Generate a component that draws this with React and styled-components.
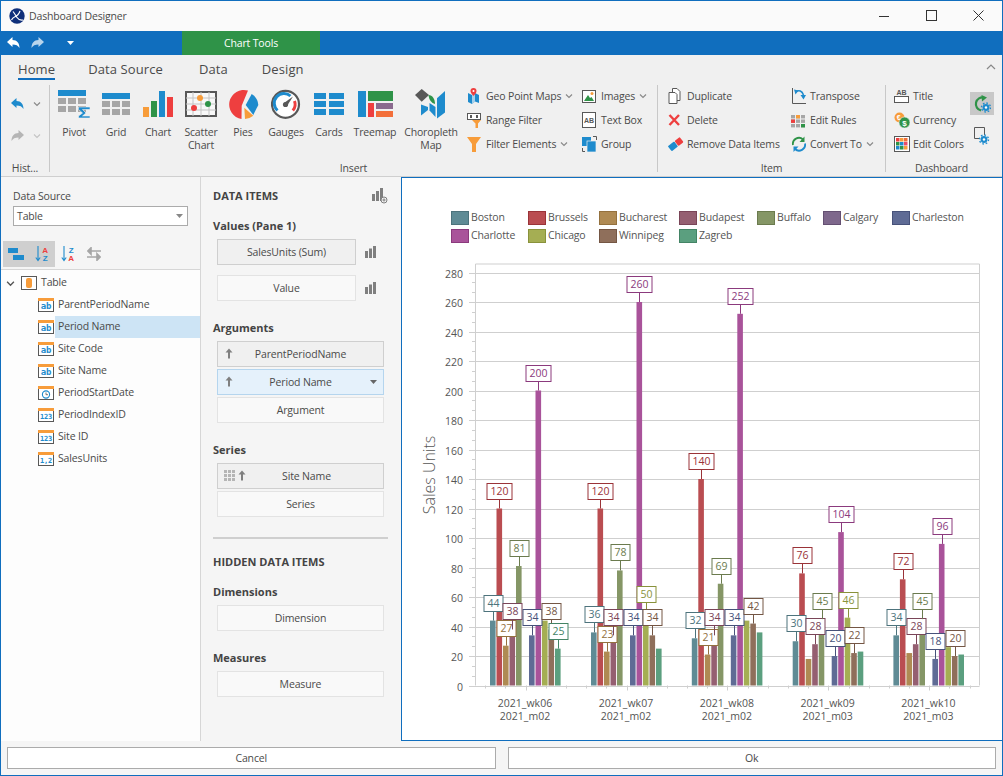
import React from 'react';
import styled, { createGlobalStyle } from 'styled-components';

const blue = '#106ebe';
const iconBlue = '#1e8bcd';
const orange = '#f79c3a';
const red = '#ee3f3f';
const green = '#2f9348';
const gray = '#a6a6a6';
const dark = '#585858';

const GlobalStyle = createGlobalStyle`
  html, body { margin: 0; padding: 0; background: #fff; }
  body {
    font-family: "Open Sans", "Noto Sans", sans-serif;
    font-size: 10.5px;
    letter-spacing: -0.15px;
    color: #4a4a4a;
  }
  svg { display: block; flex: none; }
`;

const Window = styled.div`
  box-sizing: border-box;
  width: 1003px;
  height: 776px;
  border: 1px solid ${blue};
  display: flex;
  flex-direction: column;
  overflow: hidden;
`;

const TitleBar = styled.div`
  height: 30px;
  flex: none;
  display: flex;
  align-items: center;
  padding-left: 8px;
  background: #fafafa;
  color: #4a4a4a;
`;
const TitleText = styled.span`
  margin-left: 4px;
  flex: 1;
`;
const WinButton = styled.div`
  width: 47px;
  height: 30px;
  display: flex;
  align-items: center;
  justify-content: center;
`;

const QatBar = styled.div`
  height: 24px;
  flex: none;
  display: flex;
  align-items: center;
  background: ${blue};
`;
const QatIcons = styled.div`
  width: 181px;
  display: flex;
  align-items: center;
  padding-left: 6px;
  box-sizing: border-box;
`;
const QatIcon = styled.span`
  margin-left: ${p => p.$ml || 0}px;
`;
const ContextTab = styled.div`
  width: 138px;
  height: 24px;
  box-sizing: border-box;
  background: ${green};
  color: #fff;
  display: flex;
  align-items: center;
  justify-content: center;
`;

const Ribbon = styled.div`
  height: 122px;
  flex: none;
  box-sizing: border-box;
  background: #f0f0f0;
  border-bottom: 1px solid #cfcfcf;
  position: relative;
`;
const Tabs = styled.div`
  height: 30px;
  display: flex;
  padding-left: 17px;
`;
const Tab = styled.div`
  height: 25px;
  margin-left: ${p => p.$ml || 0}px;
  box-sizing: border-box;
  padding-top: 5px;
  font-size: 13px;
  letter-spacing: 0.1px;
  color: #4a4a4a;
  border-bottom: 2px solid ${p => (p.$active ? blue : 'transparent')};
`;
const Collapse = styled.div`
  position: absolute;
  right: 6px;
  top: 9px;
`;
const Groups = styled.div`
  display: flex;
  height: 87px;
`;
const Group = styled.div`
  box-sizing: border-box;
  width: ${p => p.$w}px;
  height: 87px;
  border-right: ${p => (p.$last ? 'none' : '1px solid #c8c8c8')};
  display: flex;
  flex-direction: column;
`;
const GroupBody = styled.div`
  height: 73px;
  display: flex;
  padding-left: ${p => p.$pad || 0}px;
  box-sizing: border-box;
`;
const GroupLabel = styled.div`
  height: 14px;
  margin-bottom: -3px;
  margin-top: 3px;
  line-height: 14px;
  text-align: center;
`;
const HistoryRows = styled.div`
  padding-top: 3px;
  display: flex;
  flex-direction: column;
`;
const HistoryRow = styled.div`
  height: 32px;
  display: flex;
  align-items: center;
  gap: 9px;
  padding-left: 10px;
`;
const LargeButton = styled.div`
  width: ${p => p.$w}px;
  display: flex;
  flex-direction: column;
  align-items: center;
  padding-top: 3px;
`;
const LargeIcon = styled.div`
  height: 32px;
  display: flex;
  align-items: center;
  justify-content: center;
`;
const LargeLabel = styled.div`
  margin-top: 6px;
  line-height: 13px;
  text-align: center;
`;
const SmallColumn = styled.div`
  width: ${p => p.$w}px;
  margin-left: ${p => p.$ml || 0}px;
  display: flex;
  flex-direction: column;
  flex: none;
`;
const SmallItem = styled.div`
  height: 24px;
  margin-top: ${p => (p.$first ? '-1px' : 0)};
  display: flex;
  align-items: center;
  white-space: nowrap;
`;
const SmallIcon = styled.div`
  width: 19px;
  flex: none;
`;
const Caret = styled.span`
  margin-left: 4px;
  display: inline-flex;
`;
const SideButtons = styled.div`
  display: flex;
  flex-direction: column;
  align-items: center;
  width: 24px;
  gap: 9px;
  padding-top: 7px;
`;
const SideButton = styled.div`
  width: 24px;
  height: 23px;
  display: flex;
  align-items: center;
  justify-content: center;
  background: ${p => (p.$active ? '#c8c8c8' : 'transparent')};
`;

const Body = styled.div`
  flex: 1;
  display: flex;
  min-height: 0;
`;
const LeftPanel = styled.div`
  box-sizing: border-box;
  width: 200px;
  flex: none;
  border-right: 1px solid #d6d6d6;
  display: flex;
  flex-direction: column;
  background: #f5f5f5;
`;
const SourceBlock = styled.div`
  padding: 12px 12px 0 12px;
  height: 64px;
  box-sizing: border-box;
`;
const FieldLabel = styled.div`
  line-height: 14px;
  height: 17px;
`;
const Select = styled.div`
  box-sizing: border-box;
  height: 20px;
  width: 175px;
  border: 1px solid #ababab;
  background: #fff;
  display: flex;
  align-items: center;
  justify-content: space-between;
  padding: 0 4px 1px 3px;
`;
const SortBar = styled.div`
  height: 28px;
  padding-left: 2px;
  display: flex;
  border-bottom: 1px solid #d6d6d6;
`;
const SortButton = styled.div`
  width: 26px;
  height: 26px;
  display: flex;
  align-items: center;
  justify-content: center;
  background: ${p => (p.$active ? '#cfcfcf' : 'transparent')};
`;
const Tree = styled.div`
  flex: 1;
  padding-top: 2px;
  background: #fdfdfd;
`;
const TreeRow = styled.div`
  height: 22px;
  display: flex;
  align-items: center;
  padding-left: ${p => p.$indent}px;
`;
const TreeToggle = styled.span`
  margin-right: 6px;
`;
const TreeLabel = styled.div`
  flex: 1;
  align-self: stretch;
  display: flex;
  align-items: center;
  margin-left: 1px;
  padding: 0 0 2px 3px;
  background: ${p => (p.$selected ? '#cde4f5' : 'transparent')};
  color: #4a4a4a;
`;

const ItemsPanel = styled.div`
  box-sizing: border-box;
  width: 200px;
  flex: none;
  padding: 9px 13px 0 12px;
  background: #f5f5f5;
`;
const PanelHeader = styled.div`
  height: 20px;
  margin-top: ${p => p.$mt || 0}px;
  display: flex;
  align-items: center;
  justify-content: space-between;
  font-weight: 700;
  font-size: 11px;
  letter-spacing: 0;
  color: #444;
  padding-bottom: 1px;
  box-sizing: border-box;
`;
const SectionTitle = styled.div`
  height: 20px;
  line-height: 20px;
  margin-top: ${p => p.$mt}px;
  margin-bottom: 3px;
  font-weight: 700;
  font-size: 11px;
  letter-spacing: 0;
  color: #444;
`;
const FieldList = styled.div`
  margin: 0 4px;
  display: flex;
  flex-direction: column;
  gap: ${p => p.$gap || 2}px;
`;
const ValueRow = styled.div`
  display: flex;
  align-items: center;
  gap: 9px;
  padding-right: 7px;
`;
const variants = {
  filled: 'background:#f0f0f0;border-color:#cfcfcf;',
  empty: 'background:#f9f9f9;border-color:#e3e3e3;',
  active: 'background:#e5f1fb;border-color:#b5d5ee;',
};
const FieldButton = styled.div`
  box-sizing: border-box;
  height: 26px;
  flex: ${p => (p.$grow ? 1 : 'none')};
  border: 1px solid;
  ${p => variants[p.$kind || 'empty']}
  display: flex;
  align-items: center;
  padding-bottom: 1px;
  color: #4a4a4a;
`;
const FieldSlot = styled.div`
  width: ${p => p.$w}px;
  flex: none;
  display: flex;
  align-items: center;
  gap: 3px;
  padding-left: ${p => p.$pl || 0}px;
  box-sizing: border-box;
`;
const FieldText = styled.div`
  flex: 1;
  text-align: center;
`;
const Divider = styled.div`
  height: 2px;
  background: #cfcfcf;
  margin-top: 20px;
`;

const ChartPanel = styled.div`
  flex: 1;
  box-sizing: border-box;
  border: 1px solid ${blue};
  border-right: none;
  background: #fff;
  min-width: 0;
  display: flex;
  flex-direction: column;
`;
const Legend = styled.div`
  margin: 33px 0 0 49px;
  height: 37px;
  display: grid;
  grid-template-columns: 77px 71px 80px 78px 66px 69px auto;
  grid-auto-rows: 18px;
  align-items: start;
`;
const LegendItem = styled.div`
  display: flex;
  align-items: flex-start;
  gap: 2px;
  color: #555;
  line-height: 12px;
`;
const Swatch = styled.div`
  box-sizing: border-box;
  width: 18px;
  height: 14px;
  background: ${p => p.$color};
  border: 1px solid ${p => p.$edge};
`;
const PlotSvg = styled.svg`
  width: 600px;
  height: 493px;
  letter-spacing: 0;
  font-family: "Open Sans", "Noto Sans", sans-serif;
`;

const Footer = styled.div`
  height: 34px;
  flex: none;
  display: flex;
  gap: 12px;
  padding: 6px 6px 0 6px;
  box-sizing: border-box;
  background: #f5f5f5;
`;
const FooterButton = styled.div`
  flex: 1;
  box-sizing: border-box;
  height: 22px;
  padding-bottom: 1px;
  background: #fff;
  border: 1px solid #ababab;
  display: flex;
  align-items: center;
  justify-content: center;
  color: #4a4a4a;
`;

// ---- icons ----
const I = ({ w = 16, h = 16, vb, children }) => (
  <svg width={w} height={h} viewBox={vb || `0 0 ${w} ${h}`}>{children}</svg>
);

const Chevron = ({ color = '#8a8a8a', s = 8 }) => (
  <I w={s} h={s} vb="0 0 8 8"><path d="M1 2.5 L4 5.5 L7 2.5" fill="none" stroke={color} strokeWidth="1.2" /></I>
);
const Undo = ({ color }) => (
  <I w={13} h={12} vb="0 0 13 12"><path d="M0 5 L5.5 0 L5.5 3 C10 3 12.5 6 12.5 11 C11 8.3 9 7.4 5.5 7.4 L5.5 10 Z" fill={color} /></I>
);
const Redo = ({ color }) => (
  <I w={13} h={12} vb="0 0 13 12"><path d="M13 5 L7.5 0 L7.5 3 C3 3 0.5 6 0.5 11 C2 8.3 4 7.4 7.5 7.4 L7.5 10 Z" fill={color} /></I>
);
const Logo = () => (
  <I w={16} h={16}>
    <circle cx="8" cy="8" r="7.7" fill="#0f2f7a" />
    <path d="M4 3.5 C6 6 7 8 8 9.5 C9 11 11 12.5 14 12 M11 3 C10 6 8 8 5.5 9 C4 9.6 3 11 2.5 12" fill="none" stroke="#fff" strokeWidth="1.2" />
  </I>
);

const cells = (xs, ys, w, h, fill) =>
  ys.flatMap(y => xs.map(x => <rect key={`${x}-${y}`} x={x} y={y} width={w} height={h} fill={fill} />));

const PivotIcon = () => (
  <I w={32} h={28}>
    <rect x="0" y="0" width="28" height="6" fill={iconBlue} />
    {cells([0, 10, 20], [8, 16], 8, 6, gray)}
    <path d="M20.5 17 H32 V19.5 H24.5 L28 23 L24.5 26 H32 V28 H20.5 V26 L24.5 23 L20.5 19.5 Z" fill={iconBlue} stroke="#f0f0f0" strokeWidth="0.6" />
  </I>
);
const GridIcon = () => (
  <I w={28} h={22}>
    <rect x="0" y="0" width="28" height="6" fill={iconBlue} />
    {cells([0, 10, 20], [8, 16], 8, 6, gray)}
  </I>
);
const ChartIcon = () => (
  <I w={30} h={26}>
    <rect x="0" y="16" width="6" height="10" fill={orange} />
    <rect x="8" y="10" width="6" height="16" fill={green} />
    <rect x="16" y="0" width="6" height="26" fill={iconBlue} />
    <rect x="24" y="6" width="6" height="20" fill={red} />
  </I>
);
const ScatterIcon = () => (
  <I w={32} h={26}>
    <rect x="1" y="1" width="30" height="24" fill="#f8f8f8" stroke={dark} strokeWidth="2" />
    <path d="M1 7 H31 M1 13 H31 M1 19 H31 M8 1 V25 M16 1 V25 M24 1 V25" stroke="#c4c4c4" strokeWidth="1" />
    <circle cx="15" cy="7" r="3" fill={orange} />
    <circle cx="9" cy="17" r="3" fill={red} />
    <circle cx="23" cy="13" r="3" fill={green} />
  </I>
);
const PiesIcon = () => (
  <I w={31} h={30}>
    <path d="M13.7 16.7 L20 1.6 A14.6 14.6 0 1 0 13.5 30 Z" fill={red} />
    <path d="M17.7 16 L23.7 5 A14 14 0 0 1 30.3 16 L25.3 26 Z" fill={iconBlue} />
    <path d="M16.3 18.7 L25.3 26.7 A15 15 0 0 1 17 30 Z" fill={orange} />
  </I>
);
const GaugeIcon = () => (
  <I w={30} h={30}>
    <circle cx="14.5" cy="15.3" r="13.5" fill="#fff" stroke={dark} strokeWidth="2.2" />
    <path d="M6.5 21.5 A9.5 9.5 0 0 1 19.5 7" fill="none" stroke={iconBlue} strokeWidth="3" />
    <path d="M23.5 12 A9.5 9.5 0 0 1 21.8 21.5" fill="none" stroke={red} strokeWidth="3" />
    <path d="M13 14 L22 7.5 L16 17 Z" fill={dark} />
    <circle cx="14.5" cy="15.5" r="2.6" fill={dark} />
  </I>
);
const CardsIcon = () => (
  <I w={30} h={22}>
    {cells([0], [0, 8, 16], 12, 6, iconBlue)}
    {cells([15], [0, 8, 16], 15, 6, iconBlue)}
  </I>
);
const TreemapIcon = () => (
  <I w={35} h={26}>
    <rect x="0" y="0" width="8" height="26" fill={iconBlue} />
    <rect x="10" y="0" width="25" height="10" fill={green} />
    <rect x="10" y="12" width="6" height="14" fill={red} />
    <rect x="18" y="12" width="17" height="6" fill="#8a6a8e" />
    <rect x="18" y="20" width="17" height="6" fill="#f36f3a" />
  </I>
);
const ChoroplethIcon = () => (
  <I w={32} h={30}>
    <path d="M6 15.5 L13 18 V21 L6 26.5 Z" fill={iconBlue} />
    <path d="M14.5 14 L20.5 18 V28 L14.5 21.5 Z" fill={iconBlue} />
    <path d="M22 9.3 L30 2 V23.5 L22 29.5 Z" fill={iconBlue} />
    <path d="M6.7 0 L14 6 L6.7 12.7 L0 6 Z" fill={dark} />
    <path d="M13.5 6 C17.5 6 20 10 20 15 C16.5 14 14 11 13.5 6 Z" fill={green} />
  </I>
);

const GeoIcon = () => (
  <I>
    <path d="M1 5 L5 7 L8 5 L12 7 L12 15 L8 13.5 L5 16 L1 14 Z" fill={iconBlue} />
    <path d="M5 7 L8 5 V13.5 L5 16 Z" fill="#fff" opacity=".6" />
    <path d="M6.5 0 A3 3 0 0 1 9.5 3 C9.5 5 6.5 8 6.5 8 C6.5 8 3.5 5 3.5 3 A3 3 0 0 1 6.5 0 Z" fill={red} />
    <circle cx="6.5" cy="3" r="1" fill="#fff" />
  </I>
);
const RangeIcon = () => (
  <I>
    <rect x="0.5" y="1.5" width="13" height="6" fill="#fff" stroke={dark} />
    <rect x="3" y="3" width="2" height="3" fill={dark} />
    <rect x="9" y="3" width="2" height="3" fill={dark} />
    <path d="M5 8 H14 L11 11.5 V16 H8.5 V11.5 Z" fill={orange} />
  </I>
);
const FunnelIcon = () => (
  <I><path d="M0 1 H14 L9 8 V16 H5 V8 Z" fill={orange} /></I>
);
const ImagesIcon = () => (
  <I>
    <rect x="0.5" y="2.5" width="13" height="12" fill="#fff" stroke={dark} />
    <path d="M2 13 L6 7 L8 10 L9.5 9 L12 13 Z" fill={green} />
    <circle cx="10" cy="5.5" r="1.5" fill={orange} />
  </I>
);
const TextBoxIcon = () => (
  <I>
    <rect x="0.5" y="0.5" width="13" height="15" fill="#fff" stroke={dark} />
    <text x="7" y="10.5" textAnchor="middle" fontSize="7" fontWeight="700" fill={dark} fontFamily="Liberation Sans, sans-serif">AB</text>
  </I>
);
const GroupIcon = () => (
  <I>
    <rect x="0" y="1" width="9" height="9" fill={iconBlue} />
    <rect x="5" y="5" width="9" height="11" fill={iconBlue} stroke="#f0f0f0" strokeWidth=".7" />
    <path d="M11 .5 H14.5 V4 M.5 12 V15.5 H3" fill="none" stroke={dark} />
  </I>
);
const DuplicateIcon = () => (
  <I>
    <path d="M4.5 .5 H9 L12 3.5 V12.5 H4.5 Z" fill="#fff" stroke={dark} />
    <path d="M1 4.5 H7 L9 6.5 V15.5 H1 Z" fill="#fff" stroke={dark} />
  </I>
);
const DeleteIcon = () => (
  <I><path d="M1.5 3 L11 13 M11 3 L1.5 13" stroke={red} strokeWidth="2.4" /></I>
);
const EraserIcon = () => (
  <I>
    <g transform="rotate(-38 7.5 8)">
      <rect x="0" y="5" width="8" height="6.5" rx="1" fill={iconBlue} />
      <rect x="8.5" y="5" width="6.5" height="6.5" rx="1" fill={red} />
    </g>
  </I>
);
const TransposeIcon = () => (
  <I>
    <path d="M1.5 0 V15.5 H15" fill="none" stroke={dark} />
    <path d="M5 4 C8 1.5 11 3 12.5 7" fill="none" stroke={iconBlue} strokeWidth="1.6" />
    <path d="M3 1.5 L7.5 2.5 L4.5 6.5 Z M9.5 7 H15 L12.5 11.5 Z" fill={iconBlue} />
  </I>
);
const RulesIcon = () => (
  <I>
    {cells([0, 5, 10], [3, 7.5, 12], 4, 3.4, gray)}
    <rect x="5" y="3" width="4" height="3.4" fill={orange} />
    <rect x="0" y="7.5" width="4" height="3.4" fill={red} />
    <rect x="10" y="12" width="4" height="3.4" fill={green} />
  </I>
);
const ConvertIcon = () => (
  <I>
    <path d="M2 9 A6 6 0 0 1 12 3.5" fill="none" stroke={green} strokeWidth="1.8" />
    <path d="M13.5 0.5 V6 H8.5 Z" fill={green} />
    <path d="M14 7.5 A6 6 0 0 1 4 13" fill="none" stroke={iconBlue} strokeWidth="1.8" />
    <path d="M2.5 16 V10.5 H7.5 Z" fill={iconBlue} />
  </I>
);
const TitleIcon = () => (
  <I>
    <text x="7.5" y="6.5" textAnchor="middle" fontSize="7" fontWeight="700" fill={dark} fontFamily="Liberation Sans, sans-serif">AB</text>
    <rect x="0.5" y="8.5" width="14" height="6" fill="#fff" stroke={dark} />
  </I>
);
const CurrencyIcon = () => (
  <I>
    <circle cx="5.5" cy="5.5" r="5" fill={orange} />
    <circle cx="10.5" cy="10.5" r="5.5" fill={green} stroke="#f0f0f0" strokeWidth=".6" />
    <text x="10.5" y="13.5" textAnchor="middle" fontSize="8" fontWeight="700" fill="#fff" fontFamily="Liberation Sans, sans-serif">$</text>
    <text x="4.5" y="8" textAnchor="middle" fontSize="7" fontWeight="700" fill="#fff" fontFamily="Liberation Sans, sans-serif">€</text>
  </I>
);
const ColorsIcon = () => (
  <I>
    <rect x="0.5" y="0.5" width="15" height="15" fill="#fff" stroke={dark} />
    {[['#ee3f3f', '#f79c3a', '#f36f3a'], ['#2f9348', '#1e8bcd', '#e94e6a'], ['#1e8bcd', '#2f9348', '#f79c3a']].flatMap((row, r) =>
      row.map((c, k) => <rect key={`${r}${k}`} x={2 + k * 4} y={2 + r * 4} width="3.5" height="3.5" fill={c} />))}
  </I>
);
const Gear = ({ x, y }) => (
  <g transform={`translate(${x} ${y})`}>
    <circle r="3.4" fill={iconBlue} />
    <circle r="4.5" fill="none" stroke={iconBlue} strokeWidth="1.4" strokeDasharray="1.6 1.9" />
    <circle r="1.2" fill="#fff" />
  </g>
);
const RefreshGearIcon = () => (
  <I w={18} h={18}>
    <path d="M11 2.6 A6.6 6.6 0 1 0 8 15.5" fill="none" stroke={green} strokeWidth="2.2" />
    <path d="M8.5 0 L14 2.5 L9 6.5 Z" fill={green} />
    <Gear x={13} y={12.5} />
  </I>
);
const PageGearIcon = () => (
  <I w={16} h={18}>
    <path d="M.5 .5 H10.5 V8 M6 11.5 H.5 V.5" fill="#f0f0f0" stroke={dark} />
    <Gear x={10} y={12.5} />
  </I>
);

const TreeViewIcon = () => (
  <I w={16} h={14}>
    <rect x="0" y="1" width="10" height="5" fill={iconBlue} />
    <rect x="5" y="8" width="11" height="5" fill={iconBlue} />
  </I>
);
const letters = { fontSize: 8, fontWeight: 700, fontFamily: 'Liberation Sans, sans-serif', textAnchor: 'middle' };
const SortIcon = ({ top, bottom, topColor, bottomColor }) => (
  <I w={14} h={16}>
    <path d="M3 0 V14 M.8 11.5 L3 14.5 L5.2 11.5" fill="none" stroke={iconBlue} strokeWidth="1.1" />
    <text x="10" y="7" fill={topColor} {...letters}>{top}</text>
    <text x="10" y="15" fill={bottomColor} {...letters}>{bottom}</text>
  </I>
);
const SwapIcon = () => (
  <I w={14} h={14}>
    <path d="M14 4 H4 M4 0.8 L.8 4 L4 7.2 Z M0 10 H10 M10 6.8 L13.2 10 L10 13.2 Z" fill={gray} stroke={gray} strokeWidth="1.6" />
  </I>
);
const TableIcon = () => (
  <I>
    <rect x="0.5" y="1.5" width="15" height="13" fill="#fff" stroke={dark} />
    <rect x="5" y="3" width="6" height="10" rx="2" fill={orange} />
  </I>
);
const FieldIcon = ({ kind }) => (
  <I w={16} h={14}>
    <rect x="0.5" y="1.5" width="15" height="12" fill="#fff" stroke={dark} />
    <rect x="0" y="0" width="16" height="3" fill={orange} />
    {kind === 'date' ? (
      <g>
        <circle cx="8" cy="8.5" r="3.6" fill="none" stroke={iconBlue} strokeWidth="1.1" />
        <path d="M8 6.5 V8.7 H10" fill="none" stroke={dark} strokeWidth=".8" />
      </g>
    ) : (
      <text x="8" y="11.3" textAnchor="middle" fontSize={kind === 'ab' ? 9 : 7} fontWeight="700" fill={iconBlue} fontFamily="DejaVu Sans Mono, monospace">{kind}</text>
    )}
  </I>
);
const BarsIcon = () => (
  <I w={12} h={12}>
    <rect x="0" y="5" width="3" height="7" fill="#7f7f7f" />
    <rect x="4" y="2.5" width="3" height="9.5" fill="#7f7f7f" />
    <rect x="8" y="0" width="3" height="12" fill="#7f7f7f" />
  </I>
);
const AddBarsIcon = () => (
  <I w={16} h={16}>
    <rect x="0" y="6" width="3" height="7" fill="#7f7f7f" />
    <rect x="4" y="3" width="3" height="10" fill="#7f7f7f" />
    <rect x="8" y="0" width="3" height="13" fill="#7f7f7f" />
    <circle cx="12" cy="12" r="3" fill="#f5f5f5" stroke="#7f7f7f" />
    <path d="M10.4 12 H13.6 M12 10.4 V13.6" stroke="#7f7f7f" />
  </I>
);
const UpArrow = () => (
  <I w={8} h={11} vb="0 0 8 11"><path d="M4 0.5 L7.5 4.5 H5 V10.5 H3 V4.5 H.5 Z" fill="#7f7f7f" /></I>
);
const DotsIcon = () => (
  <I w={11} h={11}>
    {cells([0, 4, 8], [0, 4, 8], 3, 3, '#b5b5b5')}
  </I>
);
const DownCaret = ({ color = '#666' }) => (
  <I w={7} h={4} vb="0 0 7 4"><path d="M0 0 H7 L3.5 4 Z" fill={color} /></I>
);

// ---- data ----
const largeButtons = [
  { w: 42, label: 'Pivot', icon: <PivotIcon /> },
  { w: 42, label: 'Grid', icon: <GridIcon /> },
  { w: 42, label: 'Chart', icon: <ChartIcon /> },
  { w: 44, label: ['Scatter', 'Chart'], icon: <ScatterIcon /> },
  { w: 40, label: 'Pies', icon: <PiesIcon /> },
  { w: 46, label: 'Gauges', icon: <GaugeIcon /> },
  { w: 40, label: 'Cards', icon: <CardsIcon /> },
  { w: 52, label: 'Treemap', icon: <TreemapIcon /> },
  { w: 60, label: ['Choropleth', 'Map'], icon: <ChoroplethIcon /> },
];

const SmallGroup = ({ w, ml, items }) => (
  <SmallColumn $w={w} $ml={ml}>
    {items.map(([label, icon, caret], i) => (
      <SmallItem key={label} $first={i === 0}>
        <SmallIcon>{icon}</SmallIcon>
        {label}
        {caret && <Caret><Chevron /></Caret>}
      </SmallItem>
    ))}
  </SmallColumn>
);

const treeFields = [
  ['ParentPeriodName', 'ab'],
  ['Period Name', 'ab', true],
  ['Site Code', 'ab'],
  ['Site Name', 'ab'],
  ['PeriodStartDate', 'date'],
  ['PeriodIndexID', '123'],
  ['Site ID', '123'],
  ['SalesUnits', '1,2'],
];

const series = [
  { name: 'Boston', color: '#5f8b95', edge: '#4d737c' },
  { name: 'Brussels', color: '#ba4d51', edge: '#9a3338' },
  { name: 'Bucharest', color: '#af8a53', edge: '#94713e' },
  { name: 'Budapest', color: '#955f71', edge: '#7a4558' },
  { name: 'Buffalo', color: '#859666', edge: '#6b7b4e' },
  { name: 'Calgary', color: '#7e688c', edge: '#645072' },
  { name: 'Charleston', color: '#5f6b95', edge: '#47527a' },
  { name: 'Charlotte', color: '#a9539a', edge: '#8b3a7d' },
  { name: 'Chicago', color: '#a5ae53', edge: '#89923b' },
  { name: 'Winnipeg', color: '#8f6f5b', edge: '#745644' },
  { name: 'Zagreb', color: '#5b9f7f', edge: '#438465' },
];

// a value per series: null = no bar, [v] = a bar without a label
const chartData = [
  { week: '2021_wk06', month: '2021_m02', start: 490, values: [44, 120, 27, 38, 81, null, 34, 200, [44], 38, 25] },
  { week: '2021_wk07', month: '2021_m02', start: 591, values: [36, 120, 23, 34, 78, null, 34, 260, 50, 34, [25]] },
  { week: '2021_wk08', month: '2021_m02', start: 691.8, values: [32, 140, 21, 34, 69, null, 34, 252, [44], 42, [36]] },
  { week: '2021_wk09', month: '2021_m03', start: 792.7, values: [30, 76, [18], 28, 45, null, 20, 104, 46, 22, [23]] },
  { week: '2021_wk10', month: '2021_m03', start: 893.4, values: [34, 72, [22], 28, 45, null, 18, 96, [26], 20, [21]] },
];

const Y0 = 686.5;
const yOf = v => Y0 - (v / 20) * 29.5;
const yTicks = Array.from({ length: 15 }, (_, i) => i * 20);
const RIGHT = 979.5;
const TOP = 265;

const Plot = () => {
  const bars = [];
  const labels = [];
  chartData.forEach(group => {
    group.values.forEach((raw, i) => {
      if (raw === null) return;
      const v = Array.isArray(raw) ? raw[0] : raw;
      const s = series[i];
      const x = group.start + i * 6.5;
      const top = yOf(v);
      bars.push(<rect key={`${group.week}-${i}`} x={x} y={top} width={5.6} height={Y0 - top} fill={s.color} />);
      if (Array.isArray(raw)) return;
      const cx = Math.round(x + 2.8) + 0.5;
      const w = v >= 100 ? 25 : 19;
      const by = Math.round(top - 10) + 0.5;
      labels.push(
        <g key={`l-${group.week}-${i}`}>
          <path d={`M${cx} ${by} V${top}`} stroke={s.edge} />
          <rect x={cx - w / 2} y={by - 16} width={w} height={16} fill="#fff" stroke={s.edge} />
          <text x={cx} y={by - 4.2} textAnchor="middle" fontSize="10.5" fill={s.edge}>{v}</text>
        </g>
      );
    });
  });

  const xTicks = Array.from({ length: 25 }, (_, i) => 485.3 + i * 20.18);

  return (
    <PlotSvg viewBox="402 248 600 493">
      <g stroke="#cfcfcf" strokeWidth="1">
        {yTicks.map(v => (
          <path key={v} d={`M469 ${Math.round(yOf(v)) + 0.5} H${RIGHT}`} />
        ))}
        {yTicks.slice(0, -1).flatMap(v => [1, 2].map(k => (
          <path key={`${v}-${k}`} d={`M472 ${Math.round(yOf(v + (k * 20) / 3)) + 0.5} H475`} />
        )))}
        <path d={`M475.5 ${TOP} H${RIGHT} V${Y0} M475.5 ${TOP} V${Y0}`} fill="none" />
        {xTicks.map((x, i) => (
          <path key={i} d={`M${Math.round(x) + 0.5} ${Y0} V${i % 5 === 2 ? Y0 + 5 : Y0 + 3}`} />
        ))}
      </g>
      {yTicks.map(v => (
        <text key={v} x="463" y={yOf(v) + 5} textAnchor="end" fontSize="10.5" fill="#555">{v}</text>
      ))}
      <text x="435" y="476" transform="rotate(-90 435 476)" textAnchor="middle" fontSize="16" fontWeight="300" fill="#555">Sales Units</text>
      {bars}
      {labels}
      {chartData.map(g => (
        <g key={g.week} fontSize="10.5" fill="#555" textAnchor="middle">
          <text x={g.start + 35} y="708">{g.week}</text>
          <text x={g.start + 35} y="721">{g.month}</text>
        </g>
      ))}
    </PlotSvg>
  );
};

export default function App() {
  return (
    <>
      <GlobalStyle />
      <Window>
        <TitleBar>
          <Logo />
          <TitleText>Dashboard Designer</TitleText>
          <WinButton><I w={12} h={12}><path d="M0 6.5 H10" stroke="#333" /></I></WinButton>
          <WinButton><I w={12} h={12}><rect x=".5" y=".5" width="10" height="10" fill="none" stroke="#333" /></I></WinButton>
          <WinButton><I w={12} h={12}><path d="M.5 .5 L10.5 10.5 M10.5 .5 L.5 10.5" stroke="#333" /></I></WinButton>
        </TitleBar>
        <QatBar>
          <QatIcons>
            <QatIcon><Undo color="#fff" /></QatIcon>
            <QatIcon $ml={11}><Redo color="#b8d4ec" /></QatIcon>
            <QatIcon $ml={23}><DownCaret color="#fff" /></QatIcon>
          </QatIcons>
          <ContextTab>Chart Tools</ContextTab>
        </QatBar>
        <Ribbon>
          <Tabs>
            <Tab $active>Home</Tab>
            <Tab $ml={33}>Data Source</Tab>
            <Tab $ml={36}>Data</Tab>
            <Tab $ml={34}>Design</Tab>
          </Tabs>
          <Collapse>
            <I w={10} h={6}><path d="M1 5 L5 1 L9 5" fill="none" stroke="#888" strokeWidth="1.2" /></I>
          </Collapse>
          <Groups>
            <Group $w={49}>
              <GroupBody>
                <HistoryRows>
                  <HistoryRow><Undo color={iconBlue} /><Chevron /></HistoryRow>
                  <HistoryRow><Redo color="#b5b5b5" /><Chevron color="#c4c4c4" /></HistoryRow>
                </HistoryRows>
              </GroupBody>
              <GroupLabel>Hist...</GroupLabel>
            </Group>
            <Group $w={608}>
              <GroupBody $pad={3}>
                {largeButtons.map(b => (
                  <LargeButton key={String(b.label)} $w={b.w}>
                    <LargeIcon>{b.icon}</LargeIcon>
                    <LargeLabel>
                      {[].concat(b.label).map(l => <div key={l}>{l}</div>)}
                    </LargeLabel>
                  </LargeButton>
                ))}
                <SmallGroup w={115} ml={6} items={[
                  ['Geo Point Maps', <GeoIcon />, true],
                  ['Range Filter', <RangeIcon />],
                  ['Filter Elements', <FunnelIcon />, true],
                ]} />
                <SmallGroup w={70} items={[
                  ['Images', <ImagesIcon />, true],
                  ['Text Box', <TextBoxIcon />],
                  ['Group', <GroupIcon />],
                ]} />
              </GroupBody>
              <GroupLabel>Insert</GroupLabel>
            </Group>
            <Group $w={228}>
              <GroupBody $pad={10}>
                <SmallGroup w={123} items={[
                  ['Duplicate', <DuplicateIcon />],
                  ['Delete', <DeleteIcon />],
                  ['Remove Data Items', <EraserIcon />],
                ]} />
                <SmallGroup w={90} items={[
                  ['Transpose', <TransposeIcon />],
                  ['Edit Rules', <RulesIcon />],
                  ['Convert To', <ConvertIcon />, true],
                ]} />
              </GroupBody>
              <GroupLabel>Item</GroupLabel>
            </Group>
            <Group $w={111} $last>
              <GroupBody $pad={8}>
                <SmallGroup w={76} items={[
                  ['Title', <TitleIcon />],
                  ['Currency', <CurrencyIcon />],
                  ['Edit Colors', <ColorsIcon />],
                ]} />
                <SideButtons>
                  <SideButton $active><RefreshGearIcon /></SideButton>
                  <SideButton><PageGearIcon /></SideButton>
                </SideButtons>
              </GroupBody>
              <GroupLabel>Dashboard</GroupLabel>
            </Group>
          </Groups>
        </Ribbon>
        <Body>
          <LeftPanel>
            <SourceBlock>
              <FieldLabel>Data Source</FieldLabel>
              <Select>Table<DownCaret color="#888" /></Select>
            </SourceBlock>
            <SortBar>
              <SortButton $active><TreeViewIcon /></SortButton>
              <SortButton $active><SortIcon top="A" bottom="Z" topColor={red} bottomColor={iconBlue} /></SortButton>
              <SortButton><SortIcon top="Z" bottom="A" topColor={iconBlue} bottomColor={red} /></SortButton>
              <SortButton><SwapIcon /></SortButton>
            </SortBar>
            <Tree>
              <TreeRow $indent={5}>
                <TreeToggle><Chevron color="#555" s={9} /></TreeToggle>
                <TableIcon />
                <TreeLabel>Table</TreeLabel>
              </TreeRow>
              {treeFields.map(([name, kind, selected]) => (
                <TreeRow key={name} $indent={37}>
                  <FieldIcon kind={kind} />
                  <TreeLabel $selected={selected}>{name}</TreeLabel>
                </TreeRow>
              ))}
            </Tree>
          </LeftPanel>
          <ItemsPanel>
            <PanelHeader>DATA ITEMS<AddBarsIcon /></PanelHeader>
            <SectionTitle $mt={10}>Values (Pane 1)</SectionTitle>
            <FieldList $gap={10}>
              <ValueRow>
                <FieldButton $kind="filled" $grow><FieldText>SalesUnits (Sum)</FieldText></FieldButton>
                <BarsIcon />
              </ValueRow>
              <ValueRow>
                <FieldButton $grow><FieldText>Value</FieldText></FieldButton>
                <BarsIcon />
              </ValueRow>
            </FieldList>
            <SectionTitle $mt={17}>Arguments</SectionTitle>
            <FieldList>
              <FieldButton $kind="filled">
                <FieldSlot $w={20} $pl={7}><UpArrow /></FieldSlot>
                <FieldText>ParentPeriodName</FieldText>
                <FieldSlot $w={20} />
              </FieldButton>
              <FieldButton $kind="active">
                <FieldSlot $w={20} $pl={7}><UpArrow /></FieldSlot>
                <FieldText>Period Name</FieldText>
                <FieldSlot $w={20} $pl={7}><DownCaret /></FieldSlot>
              </FieldButton>
              <FieldButton><FieldText>Argument</FieldText></FieldButton>
            </FieldList>
            <SectionTitle $mt={17}>Series</SectionTitle>
            <FieldList>
              <FieldButton $kind="filled">
                <FieldSlot $w={32} $pl={6}><DotsIcon /><UpArrow /></FieldSlot>
                <FieldText>Site Name</FieldText>
                <FieldSlot $w={20} />
              </FieldButton>
              <FieldButton><FieldText>Series</FieldText></FieldButton>
            </FieldList>
            <Divider />
            <PanelHeader $mt={13}>HIDDEN DATA ITEMS</PanelHeader>
            <SectionTitle $mt={10}>Dimensions</SectionTitle>
            <FieldList><FieldButton><FieldText>Dimension</FieldText></FieldButton></FieldList>
            <SectionTitle $mt={17}>Measures</SectionTitle>
            <FieldList><FieldButton><FieldText>Measure</FieldText></FieldButton></FieldList>
          </ItemsPanel>
          <ChartPanel>
            <Legend>
              {series.map(s => (
                <LegendItem key={s.name}>
                  <Swatch $color={s.color} $edge={s.edge} />
                  {s.name}
                </LegendItem>
              ))}
            </Legend>
            <Plot />
          </ChartPanel>
        </Body>
        <Footer>
          <FooterButton>Cancel</FooterButton>
          <FooterButton>Ok</FooterButton>
        </Footer>
      </Window>
    </>
  );
}
